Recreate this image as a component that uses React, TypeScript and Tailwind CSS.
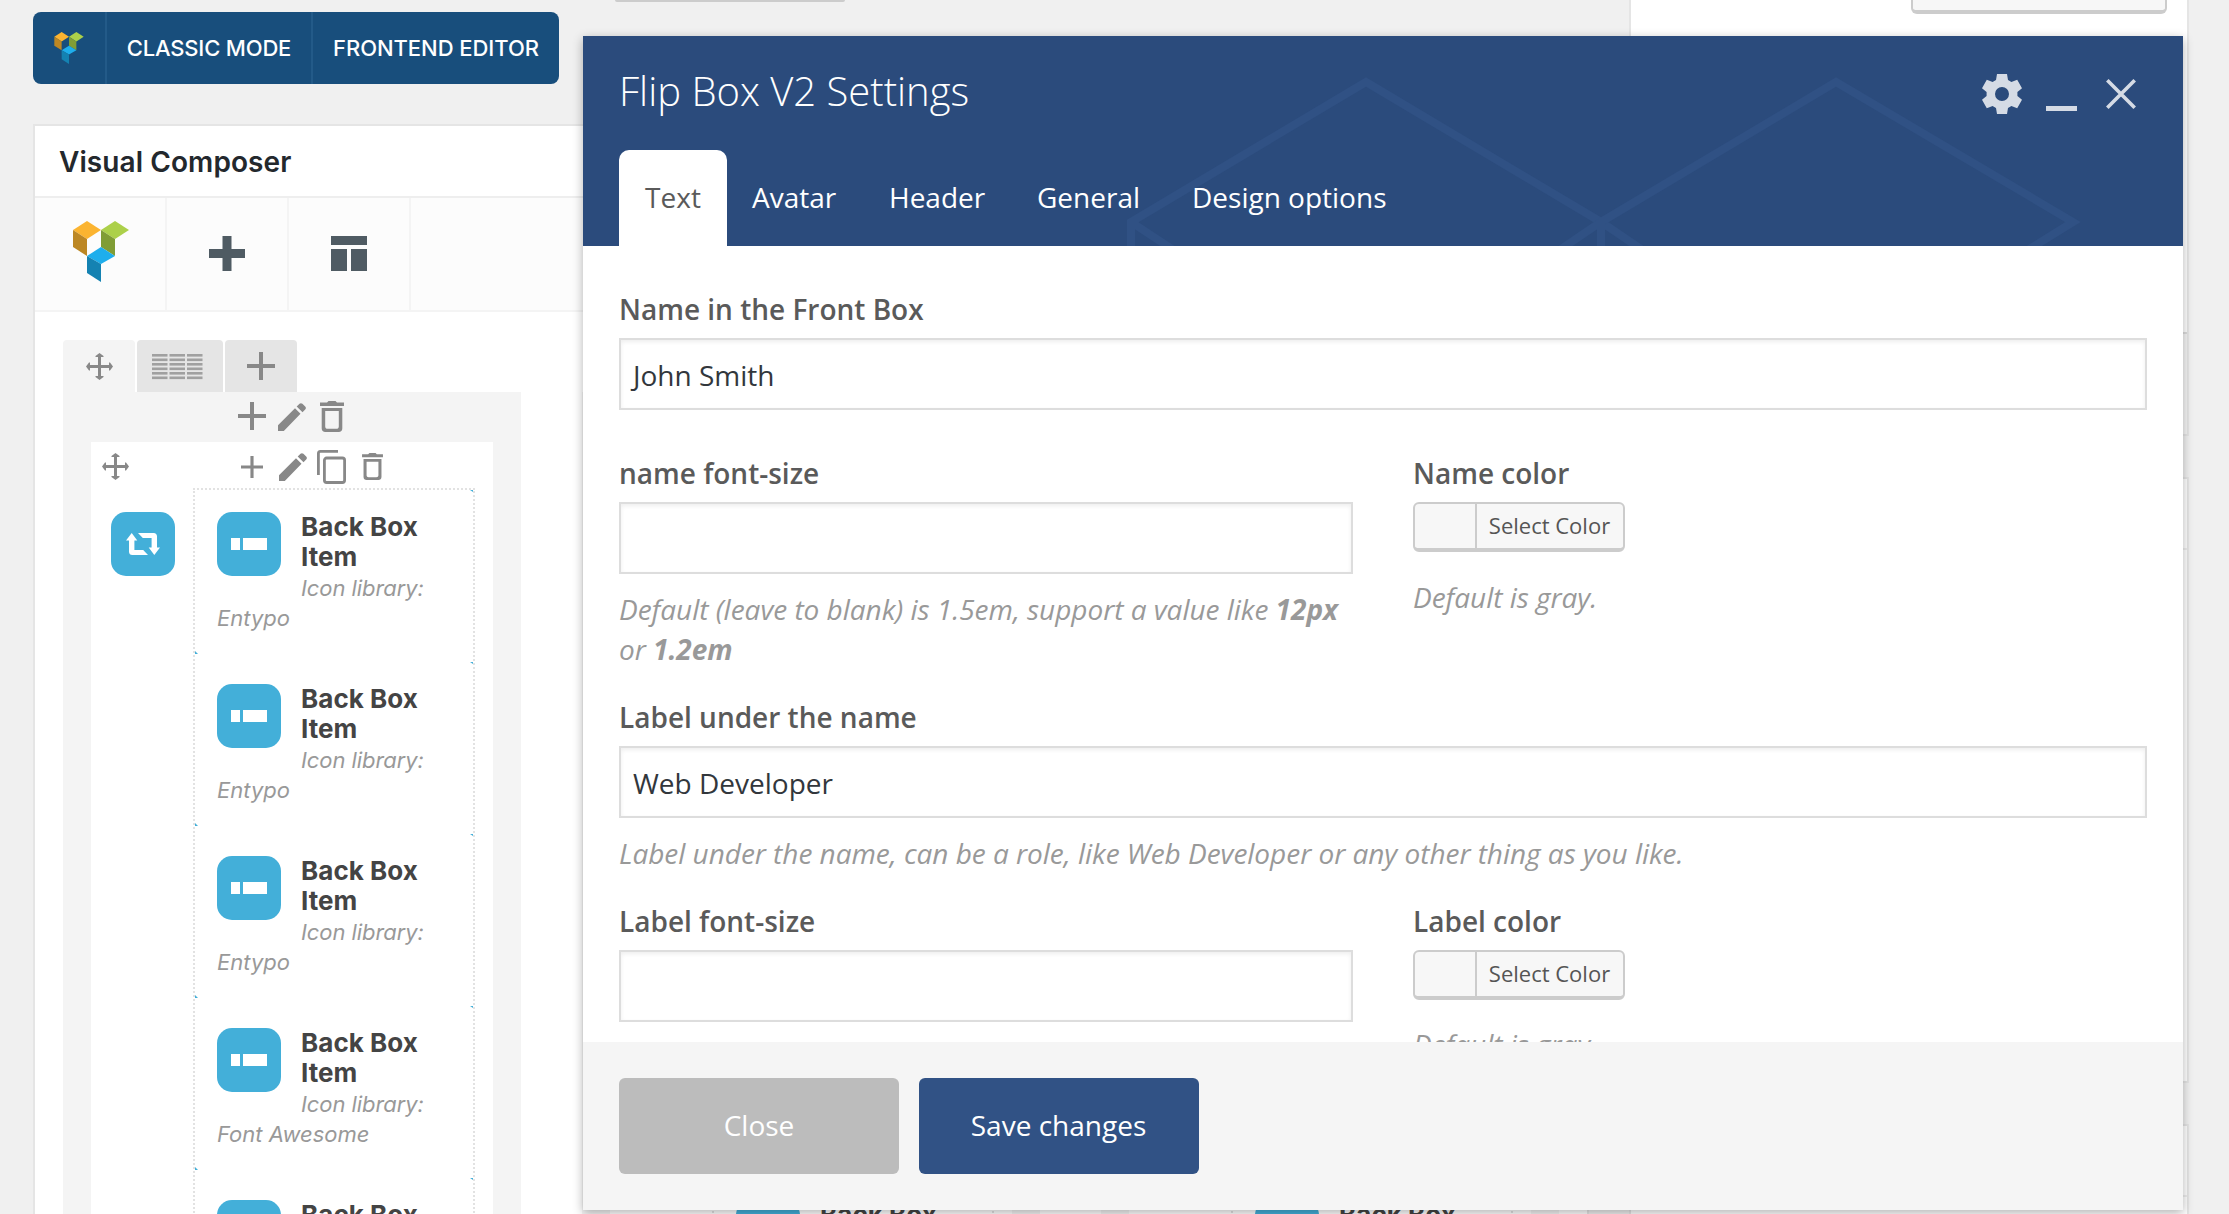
import React from "react";

type IconProps = { className?: string };

function Logo({ className = "" }: IconProps) {
  return (
    <svg viewBox="0 0 56 61" className={className}>
      <path d="M0 9 14 0 28 9 14 18Z" fill="#fbb431" />
      <path d="M0 9 14 18V35L0 26Z" fill="#bc8724" />
      <path d="M28 9 42 0 56 9 42 18Z" fill="#acd04a" />
      <path d="M28 9 42 18V35L28 26Z" fill="#809d35" />
      <path d="M14 35 28 26 42 35 28 43Z" fill="#1eaeec" />
      <path d="M14 35 28 43V61L14 52Z" fill="#1482b2" />
    </svg>
  );
}

function MoveIcon({ className = "" }: IconProps) {
  return (
    <svg viewBox="0 0 27 27" className={className} fill="#888">
      <path d="M12 4H9.5v-1L13.500 0l4 3v1H15v8h8V9.500h1l3 4-3 4h-1V15h-8v8h2.500v1l-4 3-4-3v-1H12v-8H4v2.500H3l-3-4 3-4h1V12h8Z" />
    </svg>
  );
}

function Plus({ className = "" }: IconProps) {
  return (
    <svg viewBox="0 0 28 28" className={className} fill="#888">
      <path d="M12 0h4v12h12v4H16v12h-4V16H0v-4h12Z" />
    </svg>
  );
}

function Pencil() {
  return (
    <svg viewBox="0 0 28 28" className="h-7 w-7" fill="#888">
      <path d="M0 22.200 17 5.200l5.500 5.500L5.800 28H0ZM18.700 3.500 21.500.8c.9-.9 2-.9 2.900 0l2.800 2.800c.9.900.9 2 0 2.900l-2.700 2.700Z" />
    </svg>
  );
}

function Trash({ className = "" }: IconProps) {
  return (
    <svg viewBox="0 0 24 31" className={className} fill="#888">
      <path
        fillRule="evenodd"
        d="M7 1.500 8.500 0h7L17 1.500h7V5H0V1.500ZM1.700 7h20.600v20.500c0 2-1.500 3.500-3.500 3.500H5.200c-2 0-3.500-1.500-3.500-3.500ZM5.200 10v15.500c0 1.500 1 2.300 2.300 2.300h9c1.300 0 2.300-.8 2.300-2.300V10Z"
      />
    </svg>
  );
}

function CopyIcon() {
  return (
    <svg viewBox="0 0 29 34" className="h-[34px] w-[29px]" fill="none" stroke="#888" strokeWidth="2.8">
      <path d="M1.400 25V3.500c0-1.200.8-2.100 2-2.100H21" />
      <rect x="7.400" y="8" width="20.200" height="24.500" rx="2.200" />
    </svg>
  );
}

function RowsIcon() {
  return (
    <svg viewBox="0 0 51 26" className="h-[26px] w-[51px]" fill="#a0a0a0">
      {[0, 4.5, 9, 13.500, 18, 22.500].map((y) =>
        [0, 17.500, 35].map((x) => <rect key={`${x}-${y}`} x={x} y={y} width="15.500" height="2.600" />)
      )}
    </svg>
  );
}

function FlipIcon() {
  return (
    <svg viewBox="0 0 34 22" className="h-[22px] w-[34px]" fill="#fff">
      <path d="M0 7.500 5.700 0l5.600 7.500H8.400v9.500h8.800l4.800 5H6.300C4.300 22 3 20.700 3 18.700V7.500ZM34 14.500 28.300 22l-5.600-7.500h2.900V5h-8.800L12 0h15.700c2 0 3.300 1.300 3.300 3.300v11.200Z" />
    </svg>
  );
}

function Item({ library }: { library: string }) {
  return (
    <div className="relative h-[172px] pt-[22px] pl-[22px]">
      <div className="absolute top-0 right-0 h-[2px] w-[3px] bg-[#43afd9] [clip-path:polygon(0_0,100%_0,100%_100%)]" />
      <div className="absolute bottom-[8px] left-0 h-[3px] w-[3px] bg-[#43afd9] [clip-path:polygon(0_0,100%_100%,0_100%)]" />
      <div className="flex h-[91px] gap-5">
        <div className="flex h-16 w-16 shrink-0 items-center justify-center gap-[3px] rounded-[15px] bg-[#43afd9]">
          <span className="h-3 w-[9px] bg-white" />
          <span className="h-3 w-6 bg-white" />
        </div>
        <div className="whitespace-nowrap">
          <h4 className="text-[26px] leading-[30px] font-bold tracking-[0.05px] text-[#444]">
            Back Box
            <br />
            Item
          </h4>
          <p className="pt-px text-[22px] leading-[30px] tracking-[-0.08px] text-[#999] italic">Icon library:</p>
        </div>
      </div>
      <p className="text-[22px] leading-[30px] text-[#999] italic">{library}</p>
    </div>
  );
}

function Column() {
  return (
    <div className="h-[900px] w-[458px] shrink-0 bg-[#f4f4f4] px-7">
      <div className="flex h-[50px] items-start gap-[12px] pl-[147px]">
        <Plus className="mt-[10px] h-7 w-7" />
        <div className="mt-[11px]">
          <Pencil />
        </div>
        <Trash className="mt-[9px] ml-[2px] h-[31px] w-6" />
      </div>
      <div className="h-[850px] bg-white">
        <div className="flex h-[46px] items-start">
          <MoveIcon className="mt-[11px] ml-[11px] h-[27px] w-[27px]" />
          <Plus className="mt-[14px] ml-[112px] h-[22px] w-[22px]" />
          <div className="mt-[11px] ml-4">
            <Pencil />
          </div>
          <div className="mt-2 ml-[10px]">
            <CopyIcon />
          </div>
          <Trash className="mt-[11px] ml-4 h-[27px] w-[21px]" />
        </div>
        <div className="flex">
          <div className="mt-6 ml-5 flex h-16 w-16 items-center justify-center rounded-[15px] bg-[#43afd9]">
            <FlipIcon />
          </div>
          <div className="ml-[18px] h-[800px] w-[282px] border-2 border-dotted border-[#e2e2e2]">
            <Item library="Entypo" />
            <Item library="Entypo" />
            <Item library="Entypo" />
            <Item library="Font Awesome" />
            <Item library="Entypo" />
          </div>
        </div>
      </div>
    </div>
  );
}

function Composer() {
  return (
    <section className="h-[1200px] w-[1556px] border-2 border-[#e5e5e5] bg-white">
      <h2 className="flex h-[72px] items-center border-b-2 border-[#eee] pt-[2px] pl-6 text-[28px] font-semibold tracking-[0.08px] text-[#23282d]">
        Visual Composer
      </h2>
      <div className="flex h-[114px] border-b-2 border-[#f4f4f4] bg-[#fcfcfc]">
        <div className="w-[132px] border-r-2 border-[#f4f4f4] pt-[23px] pl-[38px]">
          <Logo className="h-[61px] w-14" />
        </div>
        <div className="w-[122px] border-r-2 border-[#f4f4f4] pt-[38px] pl-[42px]">
          <svg viewBox="0 0 36 35" className="h-[35px] w-9" fill="#4f5b63">
            <path d="M13.500 0h9v13H36v9H22.500v13h-9V22H0v-9h13.500Z" />
          </svg>
        </div>
        <div className="w-[122px] border-r-2 border-[#f4f4f4] pt-[38px] pl-[42px]">
          <svg viewBox="0 0 36 35" className="h-[35px] w-9" fill="#4f5b63">
            <path d="M0 0h36v9H0ZM0 13h16v22H0ZM20 13h16v22H20Z" />
          </svg>
        </div>
      </div>
      <div className="px-7 pt-7">
        <div className="flex h-[52px] gap-[2px]">
          <div className="flex w-[72px] items-center justify-center rounded-t bg-[#f4f4f4]">
            <MoveIcon className="h-[27px] w-[27px]" />
          </div>
          <div className="flex w-[86px] items-center justify-center rounded-t bg-[#e5e5e5] pt-px pr-[6px]">
            <RowsIcon />
          </div>
          <div className="flex w-[72px] items-center justify-center rounded-t bg-[#e5e5e5] pr-px">
            <Plus className="h-7 w-7" />
          </div>
        </div>
        <div className="flex gap-[61px]">
          <Column />
          <Column />
          <Column />
        </div>
      </div>
    </section>
  );
}

function Sidebar() {
  return (
    <aside className="w-[560px] shrink-0">
      <div className="h-[436px] border-x-2 border-b-2 border-[#e5e5e5] bg-white">
        <div className="flex h-[332px] justify-end pr-[20px]">
          <div className="h-[14px] w-[256px] rounded-b-[6px] border-2 border-t-0 border-b-4 border-[#ccc] bg-[#f7f7f7]" />
        </div>
        <div className="h-[102px] border-t-2 border-[#ddd] bg-[#f5f5f5]" />
      </div>
      <div className="mt-[41px] h-[606px] border-2 border-[#e5e5e5] bg-white">
        <div className="h-[71px] border-b-2 border-[#eee]" />
      </div>
      <div className="mt-[41px] h-[200px] border-2 border-[#e5e5e5] bg-white">
        <div className="h-[71px] border-b-2 border-[#eee]" />
      </div>
    </aside>
  );
}

function Field({ label, children }: { label: string; children: React.ReactNode }) {
  return (
    <div>
      <div className="h-[50px] text-[28px] leading-[42px] font-semibold text-[#5a5a5a]">{label}</div>
      {children}
    </div>
  );
}

function TextBox({ value = "" }: { value?: string }) {
  return (
    <div className="h-[72px] w-full border-2 border-[#ddd] bg-white pl-3 text-[28px] leading-[70px] text-[#32373c] shadow-[inset_0_2px_4px_rgba(0,0,0,0.07)]">
      {value}
    </div>
  );
}

function ColorButton() {
  return (
    <div className="flex h-[50px] w-[212px] rounded-[6px] border-2 border-b-4 border-[#ccc] bg-[#f7f7f7] text-[22px] text-[#555]">
      <div className="w-[62px] shrink-0 border-r-2 border-[#ccc]" />
      <div className="flex-1 pr-px text-center leading-[42px] whitespace-nowrap">Select Color</div>
    </div>
  );
}

const hint = "text-[28px] leading-[40px] tracking-[-0.03px] italic text-[#999] whitespace-nowrap";

function Modal() {
  return (
    <div className="absolute top-9 left-[583px] flex h-[1174px] w-[1600px] flex-col bg-white font-['Open_Sans',sans-serif] shadow-[0_3px_10px_rgba(0,0,0,0.3)]">
      <header className="relative h-[210px] shrink-0 overflow-hidden bg-[#2b4b7c] pl-9 text-white">
        <svg className="absolute inset-0 h-[210px] w-[1600px]" fill="none" stroke="#305184" strokeWidth="8">
          <path d="M548 220V186L783 46l235 140 40 27M548 186l47 31" />
          <path d="M978 213l40-27L1253 46l237 140-50 31M1018 186v34" />
        </svg>
        <div className="relative flex h-[114px] justify-between">
          <h1 className="pt-[25px] text-[40px] leading-[60px] font-light">Flip Box V2 Settings</h1>
          <div className="flex items-start pr-[47px]">
            <svg viewBox="2 2 20 20" className="mt-[38px] h-10 w-10" fill="#d5dbe5">
              <path
                fillRule="evenodd"
                d="M9.500 2h5l.5 3 1.700 1 2.900-1.100 2.400 4.200-2.300 1.900v2l2.300 1.900-2.400 4.200-2.900-1.100-1.700 1-.5 3h-5l-.5-3-1.700-1-2.900 1.100L2 14.900 4.300 13v-2L2 9.100l2.400-4.200L7.300 6 9 5ZM12 8.500a3.500 3.500 0 1 0 0 7 3.500 3.500 0 0 0 0-7Z"
              />
            </svg>
            <div className="mt-[70px] ml-6 h-[5px] w-[31px] bg-[#d5dbe5]" />
            <svg viewBox="0 0 30 30" className="mt-[43px] ml-[29px] h-[30px] w-[30px]" stroke="#d5dbe5" strokeWidth="3.600">
              <path d="M1.300 1.300 28.700 28.700M28.700 1.300 1.300 28.700" />
            </svg>
          </div>
        </div>
        <nav className="relative flex h-24 text-[28px] leading-[94px]">
          <span className="w-[108px] rounded-t-[10px] bg-white text-center text-[#5a5a5a]">Text</span>
          <span className="w-[137px] pl-[25px]">Avatar</span>
          <span className="w-[148px] pl-[25px]">Header</span>
          <span className="w-[155px] pl-[25px]">General</span>
          <span className="pl-[25px]">Design options</span>
        </nav>
      </header>
      <div className="h-[796px] shrink-0 overflow-hidden px-9 pt-[42px]">
        <Field label="Name in the Front Box">
          <TextBox value="John Smith" />
        </Field>
        <div className="mt-[42px] flex h-[202px] gap-[60px]">
          <div className="w-[734px]">
            <Field label="name font-size">
              <TextBox />
              <p className={`${hint} mt-[15px]`}>
                Default (leave to blank) is 1.5em, support a value like <b>12px</b>
                <br />
                or <b>1.2em</b>
              </p>
            </Field>
          </div>
          <Field label="Name color">
            <ColorButton />
            <p className={`${hint} mt-[25px]`}>Default is gray.</p>
          </Field>
        </div>
        <div className="mt-[42px]">
          <Field label="Label under the name">
            <TextBox value="Web Developer" />
            <p className={`${hint} mt-[15px]`}>
              Label under the name, can be a role, like Web Developer or any other thing as you like.
            </p>
          </Field>
        </div>
        <div className="mt-[27px] flex gap-[60px]">
          <div className="w-[734px]">
            <Field label="Label font-size">
              <TextBox />
            </Field>
          </div>
          <Field label="Label color">
            <ColorButton />
            <p className={`${hint} mt-[24px]`}>Default is gray.</p>
          </Field>
        </div>
      </div>
      <footer className="flex flex-1 gap-5 bg-[#f5f5f5] px-9 pt-9 text-center text-[28px] leading-[94px] text-white">
        <div className="h-24 w-[280px] rounded-[6px] bg-[#bcbcbc]">Close</div>
        <div className="h-24 w-[280px] rounded-[6px] bg-[#315285] pr-px">Save changes</div>
      </footer>
    </div>
  );
}

export default function App() {
  return (
    <div className="relative h-[1214px] w-[2229px] overflow-hidden bg-[#f0f0f0] font-['Inter',sans-serif]">
      <div className="flex h-[1214px] gap-10 overflow-hidden pl-[33px]">
        <main className="w-[1556px] shrink-0">
          <div className="flex h-[124px]">
            <div className="mt-3 flex h-[72px] w-[526px] shrink-0 rounded-lg bg-[#184e7c] text-[22px] leading-[72px] font-medium whitespace-nowrap text-white">
              <div className="w-[74px] border-r-2 border-[#235a88] pt-5 pl-5">
                <Logo className="h-8 w-8" />
              </div>
              <div className="w-[206px] border-r-2 border-[#235a88] text-center tracking-[-0.18px]">CLASSIC MODE</div>
              <div className="flex-1 text-center tracking-[-0.05px]">FRONTEND EDITOR</div>
            </div>
            <div className="ml-[56px] h-[2px] w-[230px] rounded-b bg-[#ccc]" />
          </div>
          <Composer />
        </main>
        <Sidebar />
      </div>
      <Modal />
    </div>
  );
}
